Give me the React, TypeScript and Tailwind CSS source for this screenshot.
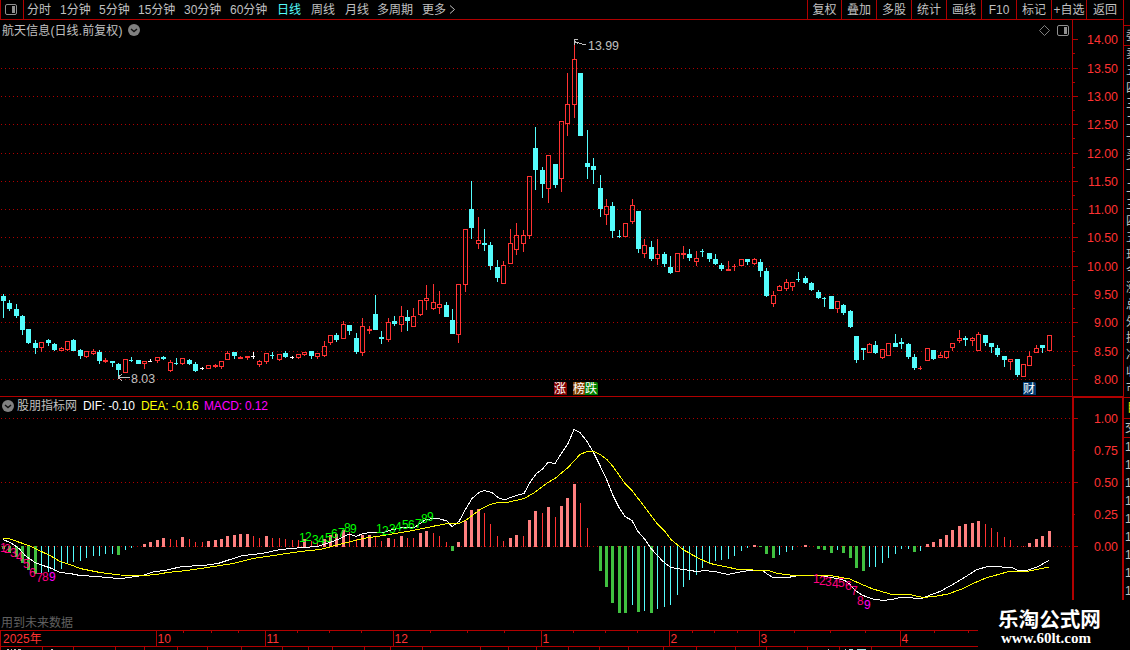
import { Fragment } from 'react'

type Candle = ['r' | 'c' | 'w', number, number, number, number]
type Bar = [string, number]

const periods = [
  { label: '分时', width: 'w-[33px]' },
  { label: '1分钟', width: 'w-[39px]' },
  { label: '5分钟', width: 'w-[39px]' },
  { label: '15分钟', width: 'w-[46px]' },
  { label: '30分钟', width: 'w-[46px]' },
  { label: '60分钟', width: 'w-[47px]' },
  { label: '日线', width: 'w-[34px]', active: true },
  { label: '周线', width: 'w-[34px]' },
  { label: '月线', width: 'w-[32px]' },
  { label: '多周期', width: 'w-[45px]' },
  { label: '更多', width: 'w-[27px]' },
]

const tools = [
  { label: '复权', width: 'w-[34px]' },
  { label: '叠加', width: 'w-[35px]' },
  { label: '多股', width: 'w-[35px]' },
  { label: '统计', width: 'w-[35px]' },
  { label: '画线', width: 'w-[35px]' },
  { label: 'F10', width: 'w-[35px]' },
  { label: '标记', width: 'w-[35px]' },
  { label: '+自选', width: 'w-[35px]' },
  { label: '返回', width: 'w-[37px]' },
]

// kind, high, body top, body bottom, low
const candles: Candle[] = [
  ['c', 294, 296, 301, 318], ['c', 300, 303, 309, 311], ['c', 304, 309, 316, 318], ['c', 315, 316, 330, 335],
  ['c', 329, 329, 343, 344], ['c', 340, 343, 348, 354], ['r', 342, 342, 348, 352], ['c', 339, 340, 343, 346],
  ['c', 343, 344, 350, 351], ['r', 347, 348, 351, 351], ['r', 341, 341, 350, 351], ['c', 339, 340, 351, 351],
  ['c', 349, 350, 356, 359], ['r', 351, 351, 357, 358], ['r', 349, 351, 354, 355], ['c', 350, 352, 361, 364],
  ['r', 358, 360, 362, 363], ['c', 361, 361, 363, 367], ['c', 363, 364, 370, 376], ['r', 359, 359, 373, 373],
  ['c', 357, 360, 361, 362], ['c', 360, 360, 364, 364], ['r', 361, 361, 364, 369], ['w', 359, 361, 362, 362],
  ['r', 357, 357, 361, 363], ['c', 356, 357, 359, 360], ['r', 360, 362, 371, 372], ['c', 358, 363, 364, 365],
  ['r', 358, 358, 364, 365], ['c', 359, 360, 364, 365], ['c', 362, 364, 371, 372], ['w', 367, 368, 369, 370],
  ['r', 365, 365, 369, 369], ['r', 364, 365, 367, 368], ['r', 361, 361, 367, 369], ['r', 351, 353, 360, 360],
  ['c', 352, 352, 356, 359], ['r', 356, 357, 359, 359], ['r', 356, 356, 358, 360], ['w', 352, 356, 357, 359],
  ['r', 360, 361, 365, 367], ['r', 353, 353, 362, 364], ['c', 352, 355, 356, 359], ['r', 354, 354, 360, 361],
  ['c', 351, 353, 357, 358], ['w', 356, 357, 358, 359], ['r', 354, 354, 358, 359], ['r', 352, 352, 355, 356],
  ['c', 351, 351, 356, 359], ['r', 353, 353, 357, 359], ['r', 341, 346, 356, 357], ['r', 335, 335, 343, 345],
  ['c', 333, 335, 340, 342], ['r', 321, 324, 339, 339], ['c', 325, 325, 331, 335], ['c', 333, 338, 352, 354],
  ['r', 318, 326, 353, 356], ['r', 326, 329, 331, 334], ['c', 295, 314, 330, 330], ['c', 331, 337, 339, 344],
  ['r', 318, 322, 340, 342], ['c', 316, 321, 324, 326], ['r', 306, 316, 325, 332], ['c', 310, 317, 321, 331],
  ['r', 308, 316, 327, 327], ['r', 300, 300, 315, 316], ['r', 285, 298, 301, 310], ['r', 284, 302, 309, 310],
  ['r', 291, 304, 308, 314], ['c', 302, 305, 317, 317], ['c', 309, 320, 334, 334], ['r', 284, 284, 335, 343],
  ['r', 229, 229, 285, 292], ['c', 181, 209, 228, 239], ['r', 217, 240, 244, 249], ['c', 229, 243, 245, 251],
  ['c', 242, 245, 266, 270], ['c', 260, 267, 278, 282], ['r', 261, 265, 284, 284], ['r', 229, 243, 264, 264],
  ['r', 223, 235, 250, 255], ['r', 230, 235, 244, 252], ['r', 176, 176, 236, 239], ['c', 127, 148, 170, 190],
  ['c', 167, 170, 184, 198], ['r', 155, 155, 189, 203], ['c', 164, 164, 185, 188], ['r', 121, 121, 179, 192],
  ['r', 73, 104, 124, 136], ['r', 41, 59, 105, 118], ['c', 73, 73, 136, 136], ['c', 130, 163, 167, 179],
  ['c', 158, 166, 170, 184], ['c', 175, 188, 209, 217], ['r', 199, 206, 215, 225], ['c', 202, 206, 231, 238],
  ['c', 230, 236, 237, 238], ['r', 223, 223, 237, 237], ['r', 199, 205, 222, 224], ['c', 211, 211, 249, 253],
  ['r', 239, 245, 254, 258], ['c', 241, 247, 259, 261], ['r', 239, 254, 259, 265], ['c', 252, 254, 264, 267],
  ['c', 256, 267, 273, 274], ['r', 253, 253, 272, 272], ['r', 246, 253, 255, 259], ['c', 249, 254, 258, 261],
  ['r', 251, 258, 262, 266], ['c', 249, 251, 252, 257], ['c', 253, 253, 259, 262], ['c', 254, 259, 264, 265],
  ['c', 263, 265, 269, 271], ['r', 261, 269, 271, 271], ['r', 264, 266, 267, 271], ['r', 259, 259, 266, 266],
  ['c', 259, 259, 262, 265], ['r', 258, 259, 264, 265], ['c', 259, 262, 271, 277], ['c', 268, 271, 296, 297],
  ['r', 291, 295, 304, 307], ['r', 285, 286, 291, 291], ['r', 279, 282, 289, 291], ['r', 282, 282, 287, 291],
  ['c', 272, 279, 280, 282], ['c', 276, 278, 283, 284], ['c', 282, 283, 290, 291], ['c', 290, 292, 298, 299],
  ['c', 297, 298, 299, 307], ['c', 296, 296, 309, 309], ['r', 301, 301, 309, 313], ['c', 304, 305, 313, 315],
  ['c', 310, 311, 327, 328], ['c', 336, 336, 360, 363], ['c', 348, 348, 350, 360], ['r', 343, 344, 353, 353],
  ['c', 341, 345, 353, 354], ['r', 349, 349, 358, 359], ['r', 343, 343, 356, 356], ['c', 334, 343, 347, 347],
  ['c', 338, 342, 344, 349], ['c', 343, 344, 357, 359], ['c', 354, 357, 368, 370], ['r', 366, 368, 369, 370],
  ['r', 348, 348, 361, 361], ['c', 350, 350, 359, 360], ['r', 352, 355, 358, 358], ['r', 351, 351, 358, 359],
  ['r', 343, 343, 348, 351], ['r', 330, 338, 341, 343], ['c', 336, 338, 340, 346], ['r', 337, 338, 341, 346],
  ['r', 332, 334, 351, 351], ['c', 335, 335, 343, 346], ['c', 343, 343, 347, 353], ['c', 345, 348, 355, 357],
  ['c', 356, 356, 360, 367], ['r', 359, 359, 362, 370], ['c', 359, 359, 375, 377], ['r', 364, 364, 377, 377],
  ['r', 351, 356, 366, 366], ['r', 345, 348, 353, 353], ['c', 345, 345, 348, 353], ['r', 335, 335, 351, 351],
]

// kind and far end of each MACD bar; an empty kind is a bar too small to draw
const bars: Bar[] = [
  ['g', 549], ['g', 553], ['g', 557], ['g', 563], ['g', 570], ['g', 574], ['c', 573], ['c', 572], ['c', 571], ['c', 569],
  ['c', 564], ['c', 562], ['c', 561], ['c', 558], ['c', 556], ['c', 556], ['c', 554], ['c', 554], ['g', 555], ['c', 550],
  ['c', 548], ['', 0], ['p', 544], ['p', 542], ['p', 540], ['p', 538], ['r', 539], ['r', 540], ['p', 537], ['r', 539],
  ['r', 542], ['r', 542], ['p', 541], ['p', 540], ['p', 539], ['p', 536], ['p', 535], ['p', 534], ['p', 534], ['r', 536],
  ['r', 538], ['p', 536], ['r', 538], ['r', 538], ['r', 539], ['r', 540], ['r', 540], ['p', 539], ['r', 541], ['r', 542],
  ['p', 539], ['p', 535], ['p', 534], ['p', 530], ['r', 532], ['r', 539], ['p', 535], ['p', 535], ['r', 537], ['r', 541],
  ['p', 538], ['r', 539], ['p', 536], ['r', 538], ['r', 538], ['p', 533], ['p', 531], ['r', 533], ['r', 536], ['r', 542],
  ['g', 551], ['p', 542], ['p', 521], ['p', 510], ['p', 509], ['r', 513], ['r', 524], ['r', 536], ['r', 541], ['p', 538],
  ['p', 535], ['r', 536], ['p', 520], ['p', 511], ['r', 513], ['p', 507], ['r', 517], ['p', 506], ['p', 498], ['p', 484],
  ['r', 503], ['r', 528], ['', 0], ['g', 571], ['g', 587], ['g', 603], ['g', 613], ['g', 613], ['c', 605], ['g', 612],
  ['c', 611], ['g', 613], ['c', 609], ['c', 607], ['c', 605], ['c', 595], ['c', 587], ['c', 580], ['c', 575], ['c', 568],
  ['c', 564], ['c', 561], ['c', 560], ['c', 559], ['c', 556], ['c', 551], ['c', 548], ['p', 545], ['g', 547], ['g', 554],
  ['g', 558], ['c', 555], ['c', 552], ['c', 550], ['', 0], ['p', 545], ['', 0], ['g', 549], ['g', 550], ['g', 553],
  ['c', 550], ['g', 553], ['g', 558], ['g', 568], ['g', 571], ['c', 567], ['c', 567], ['c', 563], ['c', 558], ['c', 554],
  ['c', 549], ['c', 549], ['g', 552], ['c', 551], ['p', 544], ['p', 542], ['p', 539], ['p', 535], ['p', 530], ['p', 526],
  ['p', 524], ['p', 523], ['p', 521], ['r', 524], ['r', 528], ['r', 532], ['r', 537], ['r', 540], ['r', 546], ['r', 546],
  ['p', 543], ['p', 539], ['p', 536], ['p', 531],
]

const dif =
  '3,539 10,542 15,545 20,549 25,555 35,562 43,565 52,568 60,572 70,573 80,575 97,576 107,577 118,578 125,577.5 135,576 143,575 153,571.5 167,569.5 182,566 203,565 218,563 230,559 243,555 262,553 280,549 303,547 317,546 330,542 340,538 349,533.5 356,536 363,533 375,531.5 383,532 393,529 403,527 415,526.5 425,519.5 433,518 440,518.5 447,520.5 452,526 459,521 466,508 472,498 479,492 484,490 492,492 498,497 504,499.5 516,495 524,493 530,482 536,473.5 542,469 548,462 555,463 562,452 568,443 574,429 580,432 587,441 593,451 600,465 607,480 613,495 619,507 625,516 632,520 638,531 645,539 651,548 663,561 671,567 683,569 697,571 705,570 717,571.5 728,574 740,571.5 753,569.5 762,569.5 767,573.5 773,577 788,577 798,575 818,575 837,578 845,580 850,584 855,590 863,595 873,598.5 883,600 892,599 902,596.5 908,596.5 915,598 922,598 930,594.5 940,591 950,585.5 962,578.5 977,569 990,565.5 1013,567.5 1018,570 1027,570 1037,566.5 1049,560'
const dea =
  '3,538 10,538.5 20,542 30,545.5 37,549 50,555 60,561 70,564 80,568 100,572 120,574.5 143,575 157,574 167,572 187,570 207,567 233,563 253,558 280,554 300,551 320,549 343,543 363,538 383,535 413,530 437,525 448,523 459,523 467,519 480,509 490,504 498,502 507,502 524,498 533,493 548,482 555,478 568,467 580,454 587,451 594,451 600,454 607,459 613,466 625,483 632,490 645,507 657,523 665,531 671,539 683,549 697,557 710,563 727,566.5 738,569 753,569.5 762,569.5 770,570.5 778,573 790,574.5 827,574.5 850,578.5 862,584 873,588.5 892,594 912,594.5 923,597 937,595.5 948,593.5 962,588.5 973,583 987,577 993,575.5 1007,571.5 1027,571 1049,566.5'

const prices: [string, number][] = [
  ['14.00', 39], ['13.50', 68], ['13.00', 96], ['12.50', 124], ['12.00', 153], ['11.50', 181], ['11.00', 209],
  ['10.50', 237], ['10.00', 266], ['9.50', 294], ['9.00', 322], ['8.50', 351], ['8.00', 379],
]

const levels: [string, number][] = [['1.00', 418], ['0.75', 450], ['0.50', 482], ['0.25', 514], ['0.00', 546]]

// nine-count marks: x and baseline of each digit
const marks = [
  { color: '#ff0080', points: [[0, 552], [4, 553], [10, 557], [16, 561], [23, 568], [29, 577], [36, 582], [42, 581], [49, 581]], last: '#ff00ff' },
  { color: '#00ff00', points: [[299, 542], [305, 541], [312, 544], [318, 544], [325, 542], [331, 538], [338, 537], [344, 532], [350, 533]], last: '#00ff00' },
  { color: '#00ff00', points: [[376, 533], [382, 535], [389, 533], [395, 531], [402, 529], [408, 529], [415, 528], [421, 523], [427, 521]], last: '#00ff00' },
  { color: '#ff0080', points: [[813, 583], [819, 585], [825, 586], [832, 588], [838, 587], [845, 590], [851, 595], [857, 605], [864, 609]], last: '#ff00ff' },
]

const months: [string, number][] = [['10', 156], ['11', 265], ['12', 393], ['1', 541], ['2', 669], ['3', 759], ['4', 900]]
const weekTicks = [183, 211, 238, 297, 329, 361, 430, 467, 504, 573, 605, 637, 692, 714, 737, 794, 830, 865, 934, 968]
const lowerTicks = [0, 42, 73, 115, 144, 177, 207, 241, 282, 308, 332, 364, 390, 422, 480, 508, 536, 568, 599, 628, 663, 696, 735, 766, 807, 839, 871]

const barColors: Record<string, string> = { p: '#ff8080', r: '#ff3232', g: '#40c040', c: '#54fcfc' }
const candleColors = { r: '#ff3232', c: '#54fcfc', w: '#ffffff' }

const xAt = (i: number) => Math.floor(3.25 + i * 6.417)

function CandleShape({ data, x }: { data: Candle; x: number }) {
  const [kind, high, top, bottom, low] = data
  const color = candleColors[kind]
  const hollow = kind === 'r' && bottom - top > 2
  return (
    <g>
      {high < top && <rect x={x} y={high} width={1} height={top - high} fill={color} />}
      {low > bottom && <rect x={x} y={bottom} width={1} height={low - bottom} fill={color} />}
      {hollow ? (
        <rect x={x - 1.5} y={top + 0.5} width={4} height={bottom - top - 1} fill="none" stroke={color} />
      ) : (
        <rect x={x - 2} y={top} width={kind === 'w' || bottom - top === 1 ? 4 : 5} height={bottom - top} fill={color} />
      )}
    </g>
  )
}

function DottedLine({ y }: { y: number }) {
  return <line x1={1} x2={1072} y1={y + 0.5} y2={y + 0.5} stroke="#b00000" strokeDasharray="1 3" />
}

function AxisLabel({ text, y }: { text: string; y: number }) {
  return (
    <text x={1118} y={y + 5} textAnchor="end" fill="#ff3232" fontSize={12.4}>
      {text}
    </text>
  )
}

function PriceChart() {
  return (
    <svg className="block" width={1123} height={377} viewBox="0 20 1123 377">
      <g shapeRendering="crispEdges">
        {prices.slice(1).map(([label, y]) => (
          <DottedLine key={label} y={y} />
        ))}
        {candles.map((c, i) => (
          <CandleShape key={i} data={c} x={xAt(i)} />
        ))}
        <rect x={1072} y={20} width={1} height={377} fill="#b00000" />
        <rect x={0} y={396} width={1123} height={1} fill="#b00000" />
        {prices.map(([label, y]) => (
          <Fragment key={label}>
            <rect x={1073} y={y} width={5} height={1} fill="#b00000" />
            {y < 379 && <rect x={1073} y={y + 14} width={2} height={1} fill="#b00000" />}
          </Fragment>
        ))}
        <path d="M586 44.5 H583 L575 41.5 M574.5 45 V39.5 H578 M575 41.5 L578 44" fill="none" stroke="#c0c0c0" />
        <path d="M130 377.5 H118 M118 377.5 L122 374 M118 377.5 L122 381" fill="none" stroke="#c0c0c0" />
      </g>
      {prices.map(([label, y]) => (
        <AxisLabel key={label} text={label} y={y} />
      ))}
      <text x={588} y={50} fill="#c0c0c0" fontSize={12.4}>13.99</text>
      <text x={131} y={383} fill="#c0c0c0" fontSize={12.4}>8.03</text>
    </svg>
  )
}

function MacdChart() {
  return (
    <svg className="block" width={1123} height={233} viewBox="0 397 1123 233">
      <g shapeRendering="crispEdges">
        <DottedLine y={418} />
        <DottedLine y={482} />
        <DottedLine y={546} />
        {bars.map(([kind, end], i) => {
          if (!kind) return null
          const thick = kind === 'p' || kind === 'g'
          const up = kind === 'p' || kind === 'r'
          return (
            <rect
              key={i}
              x={thick ? xAt(i) - 1 : xAt(i)}
              y={up ? end : 546}
              width={thick ? 3 : 1}
              height={up ? 547 - end : end - 546}
              fill={barColors[kind]}
            />
          )
        })}
        <polyline points={dif} fill="none" stroke="#ffffff" transform="translate(0 0.5)" />
        <polyline points={dea} fill="none" stroke="#ffff00" transform="translate(0 0.5)" />
      </g>
      {marks.map((m, n) => (
        <g key={n} fontSize={12}>
          {m.points.map(([x, y], i) => (
            <text key={i} x={x} y={y} fill={i === 8 ? m.last : m.color}>
              {i + 1}
            </text>
          ))}
        </g>
      ))}
      <g shapeRendering="crispEdges" fill="#b00000">
        <rect x={1072} y={397} width={51} height={1} />
        <rect x={1072} y={397} width={2} height={203} />
        <rect x={1122} y={397} width={1} height={203} />
        {levels.map(([label, y], i) => (
          <rect key={label} x={1074} y={y} width={i % 2 ? 1 : 4} height={1} />
        ))}
      </g>
      {levels.map(([label, y]) => (
        <AxisLabel key={label} text={label} y={y} />
      ))}
    </svg>
  )
}

function TimeAxis() {
  return (
    <svg className="block" width={1123} height={20} viewBox="0 630 1123 20">
      <g shapeRendering="crispEdges" fill="#b00000">
        <rect x={0} y={630} width={978} height={1} />
        <rect x={0} y={646} width={978} height={1} />
        <rect x={0} y={630} width={1} height={17} />
        {months.map(([label, x]) => (
          <rect key={label} x={x} y={630} width={1} height={17} />
        ))}
        {weekTicks.map(x => (
          <rect key={x} x={x} y={631} width={1} height={2} />
        ))}
        {lowerTicks.map(x => (
          <rect key={x} x={x} y={647} width={1} height={3} />
        ))}
      </g>
      {/* Tops of the status line below the axis */}
      <g shapeRendering="crispEdges">
        <path d="M7 649.5 H9 M11 649.5 H12 M14 649.5 H16 M18 649.5 H21 M51 649.5 H53 M828 649.5 H829" stroke="#c0c0c0" />
        <path d="M845 649.5 H846 M849 649.5 H853 M857 649.5 H866" stroke="#a0e0e0" />
      </g>
      <g fill="#ff3232" fontSize={12}>
        <text x={3} y={643}>2025年</text>
        {months.map(([label, x]) => (
          <text key={label} x={x + 1.5} y={643}>{label}</text>
        ))}
      </g>
    </svg>
  )
}

function PanelIcon({ color }: { color: string }) {
  return (
    <svg width={13} height={11} viewBox="0 0 13 11">
      <rect x={0.5} y={0.5} width={11} height={10} rx={1.5} fill="none" stroke={color} />
      <rect x={7} y={2} width={3} height={7} fill={color} />
    </svg>
  )
}

function RoundArrow() {
  return (
    <svg width={12} height={12} viewBox="0 0 12 12">
      <circle cx={6} cy={6} r={6} fill="#808080" />
      <path d="M3 5 L6 7.6 L9 5" fill="none" stroke="#101010" strokeWidth={1.4} />
    </svg>
  )
}

function Toolbar() {
  return (
    <div className="flex h-5 items-stretch border-b border-[#b00000] text-[#c0c0c0]">
      <div className="flex w-6 items-center border-x border-[#b00000] pl-1">
        <PanelIcon color="#909090" />
      </div>
      <div className="flex items-center pl-[3px]">
        {periods.map(p => (
          <span key={p.label} className={`${p.width} ${p.active ? 'text-[#54fcfc]' : ''}`}>
            {p.label}
          </span>
        ))}
        <svg width={7} height={9} viewBox="0 0 7 9">
          <path d="M1 0.5 L5.5 4.5 L1 8.5" fill="none" stroke="#c0c0c0" />
        </svg>
      </div>
      <div className="ml-auto flex">
        {tools.map(t => (
          <div key={t.label} className={`${t.width} flex items-center justify-center border-l border-[#b00000]`}>
            {t.label}
          </div>
        ))}
      </div>
    </div>
  )
}

function SideStrip() {
  return (
    <div className="flex h-[600px] w-[7px] shrink-0 flex-col overflow-hidden border-l border-[#b00000] text-[#c0c0c0]">
      <div className="h-[26px] border-b border-[#b00000]" />
      <div className="h-5 border-b border-[#b00000] pl-[2px] leading-5">委</div>
      <div className="flex h-[352px] flex-col justify-around border-b border-[#b00000] pl-[2px] leading-4">
        {'卖五四三二一买一二三四五现今涨总外换净收市'.split('').map((c, i) => (
          <span key={i}>{c}</span>
        ))}
      </div>
      <div className="h-[21px] border-b border-[#b00000] pl-[3px] leading-5 text-[#e0e000]">目</div>
      <div className="h-[19px] border-b border-[#b00000] pl-[1px] leading-[18px]">交</div>
      <div className="flex flex-col pl-[1px] leading-[18px]">
        {[1, 2, 3, 4, 5, 6, 7, 8, 9].map(n => (
          <span key={n}>1</span>
        ))}
      </div>
    </div>
  )
}

export default function App() {
  return (
    <div className="relative flex h-[650px] w-[1130px] overflow-hidden bg-black text-[12px] leading-none whitespace-nowrap font-['Liberation_Sans','Noto_Sans_CJK_SC',sans-serif]">
      <div className="flex w-[1123px] shrink-0 flex-col">
        <Toolbar />

        <div className="relative">
          <PriceChart />
          <div className="absolute inset-x-0 top-[3px] flex items-center pl-[2px] text-[#c0c0c0]">
            <span className="mr-[5px] pt-[2px] tracking-[0.1px]">航天信息(日线.前复权)</span>
            <RoundArrow />
            <div className="mr-[53px] ml-auto flex items-center gap-[7px]">
              <svg width={11} height={11} viewBox="0 0 11 11">
                <path d="M5.5 0.5 L10.5 5.5 L5.5 10.5 L0.5 5.5 Z" fill="none" stroke="#808080" />
              </svg>
              <PanelIcon color="#909090" />
            </div>
          </div>
          <div className="absolute top-[362px] left-[554px] flex gap-[6px] leading-[14px] text-white">
            <span className="h-[13px] w-[13px] rounded-tr-[2px] bg-[#800000]">涨</span>
            <span className="flex">
              <span className="h-[13px] w-3 bg-[#804000]">榜</span>
              <span className="h-[13px] w-[13px] rounded-tr-[2px] bg-[#008000]">跌</span>
            </span>
          </div>
          <span className="absolute top-[362px] left-[1023px] h-[13px] w-[13px] rounded-tr-[2px] bg-[#003a70] leading-[14px] text-white">财</span>
        </div>

        <div className="relative">
          <MacdChart />
          <div className="absolute top-[2px] left-[2px] flex items-center">
            <RoundArrow />
            <span className="ml-[3px] w-[66px] pt-px text-[#c0c0c0]">股朋指标网</span>
            <span className="w-[58px] tracking-[-0.15px] text-white">DIF: -0.10</span>
            <span className="w-[63px] tracking-[-0.1px] text-[#ffff00]">DEA: -0.16</span>
            <span className="tracking-[-0.15px] text-[#ff00ff]">MACD: 0.12</span>
          </div>
          <span className="absolute top-[220px] left-px text-[#606060]">用到未来数据</span>
        </div>

        <TimeAxis />
      </div>

      <SideStrip />

      {/* Site watermark */}
      <div className="absolute top-[600px] left-[978px] flex h-[50px] w-[152px] flex-col bg-black text-white">
        <span className="mt-[9px] ml-[20px] text-[20.6px] leading-[21px] font-bold">乐淘公式网</span>
        <span className="ml-[23px] font-['Liberation_Serif',serif] text-[15px] leading-[17px] font-bold">www.60lt.com</span>
      </div>
    </div>
  )
}
